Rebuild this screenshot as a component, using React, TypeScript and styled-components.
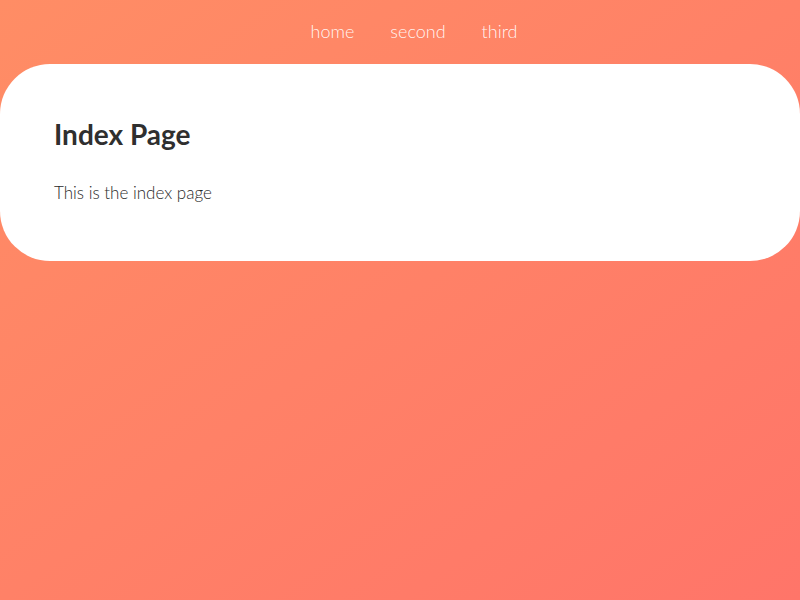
import React from "react";
import styled, { createGlobalStyle } from "styled-components";

const Global = createGlobalStyle`
  html, body { margin: 0; padding: 0; }
  body {
    min-height: 600px;
    background: linear-gradient(to bottom right, #ff8d65, #ff7569);
    font-family: Lato, "Open Sans", sans-serif;
  }
`;

const Page = styled.div`
  min-height: 600px;
  display: flex;
  flex-direction: column;
`;

const Nav = styled.nav`
  height: 64px;
  display: flex;
  justify-content: center;
  align-items: center;
  gap: 36px;
  padding-left: 28px;
  padding-bottom: 2px;
  box-sizing: border-box;
`;

const NavLink = styled.a`
  color: rgba(255, 255, 255, 0.92);
  font-size: 18px;
  font-weight: 300;
  text-decoration: none;
  line-height: 1;
`;

const Card = styled.main`
  background: #fff;
  border-radius: 50px;
  padding: 52px 54px 56px;
  height: 197px;
  box-sizing: border-box;
`;

const Title = styled.h1`
  margin: 0;
  font-size: 28px;
  font-weight: 700;
  color: #2f2f2f;
  line-height: 36px;
`;

const Text = styled.p`
  margin: 29px 0 0;
  font-size: 17px;
  font-weight: 300;
  color: #2a2a2a;
  line-height: 24px;
`;

export default function App() {
  return (
    <>
      <Global />
      <Page>
        <Nav>
          <NavLink href="#">home</NavLink>
          <NavLink href="#">second</NavLink>
          <NavLink href="#">third</NavLink>
        </Nav>
        <Card>
          <Title>Index Page</Title>
          <Text>This is the index page</Text>
        </Card>
      </Page>
    </>
  );
}
